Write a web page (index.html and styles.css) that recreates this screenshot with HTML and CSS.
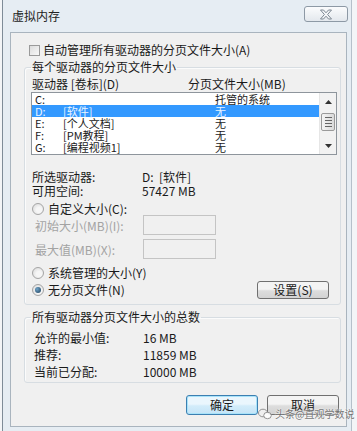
FILE: index.html
```html
<!DOCTYPE html>
<html lang="zh-CN">
<head>
    <meta charset="UTF-8">
    <meta name="viewport" content="width=device-width, initial-scale=1.0">
    <title>虚拟内存</title>
    <link rel="stylesheet" href="styles.css">
</head>
<body>
<div class="window">
    <div class="titlebar">
        <span class="title">虚拟内存</span>
        <div class="close">
            <svg width="14" height="11" viewBox="0 0 14 11">
                <path d="M1.5 1 H4.5 L7 3.8 L9.5 1 H12.5 L8.6 5.5 L12.5 10 H9.5 L7 7.2 L4.5 10 H1.5 L5.4 5.5 Z" fill="#f4f6f8" stroke="#7d8893" stroke-width="1"/>
            </svg>
        </div>
    </div>

    <div class="client">
        <div class="check-row">
            <span class="checkbox"></span>
            <span>自动管理所有驱动器的分页文件大小(A)</span>
        </div>

        <fieldset class="group group-drives">
            <legend>每个驱动器的分页文件大小</legend>
            <div class="list-head">
                <span>驱动器 [卷标](D)</span>
                <span>分页文件大小(MB)</span>
            </div>
            <div class="listbox">
                <div class="rows">
                    <div class="row"><span>C:</span><span></span><span>托管的系统</span></div>
                    <div class="row selected"><span>D:</span><span>[软件]</span><span>无</span></div>
                    <div class="row"><span>E:</span><span>[个人文档]</span><span>无</span></div>
                    <div class="row"><span>F:</span><span>[PM教程]</span><span>无</span></div>
                    <div class="row"><span>G:</span><span>[编程视频1]</span><span>无</span></div>
                </div>
                <div class="scrollbar">
                    <div class="sb-btn">
                        <svg width="7" height="4" viewBox="0 0 7 4"><path d="M0 4 L3.5 0 L7 4 Z" fill="#333"/></svg>
                    </div>
                    <div class="sb-track">
                        <div class="thumb">
                            <span></span><span></span><span></span><span></span>
                        </div>
                    </div>
                    <div class="sb-btn">
                        <svg width="7" height="4" viewBox="0 0 7 4"><path d="M0 0 L7 0 L3.5 4 Z" fill="#333"/></svg>
                    </div>
                </div>
            </div>

            <div class="info first">
                <span class="info-label">所选驱动器:</span>
                <span>D:&nbsp;&nbsp;[软件]</span>
            </div>
            <div class="info">
                <span class="info-label">可用空间:</span>
                <span>57427 MB</span>
            </div>

            <div class="radio-row custom">
                <span class="radio"></span>
                <span>自定义大小(C):</span>
            </div>
            <div class="field-row">
                <span class="field-label">初始大小(MB)(I):</span>
                <span class="textbox"></span>
            </div>
            <div class="field-row second">
                <span class="field-label">最大值(MB)(X):</span>
                <span class="textbox"></span>
            </div>

            <div class="radio-row system">
                <span class="radio"></span>
                <span>系统管理的大小(Y)</span>
            </div>
            <div class="last-row">
                <div class="radio-row">
                    <span class="radio checked"></span>
                    <span>无分页文件(N)</span>
                </div>
                <button class="btn set-btn">设置(S)</button>
            </div>
        </fieldset>

        <fieldset class="group group-total">
            <legend>所有驱动器分页文件大小的总数</legend>
            <div class="total first">
                <span class="total-label">允许的最小值:</span>
                <span>16 MB</span>
            </div>
            <div class="total">
                <span class="total-label">推荐:</span>
                <span>11859 MB</span>
            </div>
            <div class="total">
                <span class="total-label">当前已分配:</span>
                <span>10000 MB</span>
            </div>
        </fieldset>

        <div class="buttons">
            <button class="btn default">确定</button>
            <button class="btn">取消</button>
        </div>
    </div>

    <div class="watermark">
        <svg width="14" height="12" viewBox="0 0 14 12">
            <ellipse cx="5" cy="5" rx="4.5" ry="3.8" fill="none" stroke="#8a8a8a" stroke-width="1"/>
            <ellipse cx="9.5" cy="7.5" rx="3.8" ry="3.2" fill="#fff" stroke="#8a8a8a" stroke-width="1"/>
        </svg>
        <span>头条@直观学数说</span>
    </div>
</div>
</body>
</html>
```

FILE: styles.css
```css
body {
    margin: 0;
    background-color: #f3f5f7;
    font-family: "Noto Sans CJK SC", "Liberation Sans", sans-serif;
    font-size: 12px;
    color: #1a1a1a;
}

.window {
    position: relative;
    width: 350px;
    height: 431px;
    margin-left: 2px;
    box-sizing: border-box;
    border-left: 1px solid #7f8c98;
    border-right: 1px solid #b5c0ca;
    background-color: #e6edf3;
}

.titlebar {
    height: 32px;
    display: flex;
    justify-content: space-between;
    align-items: flex-start;
    padding: 6px 3px 0 9px;
    box-sizing: border-box;
}

.title {
    margin-top: 3px;
    line-height: 14px;
    font-size: 12px;
    color: #222;
}

.close {
    width: 44px;
    height: 16px;
    box-sizing: border-box;
    border: 1px solid #8d99a5;
    border-radius: 3px;
    background: linear-gradient(#fbfcfd, #e3e8ed);
    display: flex;
    justify-content: center;
    align-items: center;
}

.client {
    margin-left: 7px;
    width: 337px;
    height: 395px;
    box-sizing: border-box;
    border: 1px solid #a9b4be;
    background-color: #f0f0f0;
    padding: 10px 5px 0 13px;
}

.check-row {
    height: 14px;
    line-height: 14px;
    display: flex;
    align-items: center;
    gap: 3px;
    padding-left: 5px;
}

.checkbox {
    width: 11px;
    height: 11px;
    box-sizing: border-box;
    border: 1px solid #9a9a9a;
    background: linear-gradient(135deg, #dcdcdc, #f8f8f8);
}

.group {
    margin: 3px 0 0 0;
    width: 317px;
    box-sizing: border-box;
    border: 1px solid #d7dde2;
    border-radius: 3px;
    padding: 0 3px 5px 6px;
    box-shadow: inset 1px 1px 0 #fbfbfb;
}

.group legend {
    padding: 0 1px;
    line-height: 14px;
    height: 14px;
}

.list-head {
    margin-top: 3px;
    height: 14px;
    line-height: 14px;
    display: grid;
    grid-template-columns: 156px 1fr;
    padding-left: 1px;
}

.listbox {
    margin-top: 1px;
    height: 63px;
    box-sizing: border-box;
    border: 1px solid #8e959c;
    background-color: #fff;
    display: flex;
}

.rows {
    flex: 1;
}

.row {
    height: 12px;
    line-height: 12px;
    font-size: 11px;
    display: grid;
    grid-template-columns: 28px 152px 1fr;
    padding-left: 3px;
}

.row.selected {
    background-color: #3399ff;
    color: #eaf4ff;
}

.scrollbar {
    width: 17px;
    display: flex;
    flex-direction: column;
    background-color: #f2f2f2;
    border-left: 1px solid #e6e6e6;
    box-sizing: border-box;
}

.sb-btn {
    height: 17px;
    display: flex;
    justify-content: center;
    align-items: center;
}

.sb-track {
    flex: 1;
}

.thumb {
    margin: 3px 1px 0 1px;
    height: 18px;
    box-sizing: border-box;
    border: 1px solid #9a9a9a;
    border-radius: 2px;
    background: linear-gradient(90deg, #f4f4f4, #dadada);
    display: flex;
    flex-direction: column;
    justify-content: center;
    align-items: center;
    gap: 2px;
}

.thumb span {
    width: 7px;
    height: 1px;
    background-color: #666;
}

.info {
    height: 14px;
    line-height: 14px;
    display: flex;
    padding-left: 1px;
}

.info.first {
    margin-top: 15px;
}

.info-label {
    width: 110px;
}

.radio-row {
    height: 12px;
    line-height: 12px;
    display: flex;
    align-items: center;
    gap: 4px;
    padding-left: 1px;
}

.radio-row.custom {
    margin-top: 5px;
}

.radio-row.system {
    margin-top: 8px;
}

.radio {
    width: 12px;
    height: 12px;
    box-sizing: border-box;
    border-radius: 50%;
    border: 1px solid #a5a5a5;
    background: radial-gradient(circle at 60% 60%, #f6f6f6 30%, #d6d6d6 100%);
    display: flex;
    justify-content: center;
    align-items: center;
}

.radio.checked::after {
    content: "";
    width: 6px;
    height: 6px;
    border-radius: 50%;
    background: radial-gradient(circle at 35% 35%, #6fa3c8, #1d3f5a);
}

.field-row {
    height: 20px;
    display: flex;
    align-items: center;
    color: #a3a3a3;
    padding-left: 4px;
}

.field-row.second {
    margin-top: 4px;
}

.field-label {
    width: 108px;
}

.textbox {
    width: 73px;
    height: 20px;
    box-sizing: border-box;
    border: 1px solid #c4c4c4;
    background-color: #f0f0f0;
}

.last-row {
    margin-top: 2px;
    height: 18px;
    display: flex;
    justify-content: space-between;
    align-items: center;
    padding-right: 8px;
}

.btn {
    font-family: "Noto Sans CJK SC", "Liberation Sans", sans-serif;
    font-size: 12px;
    color: #1a1a1a;
    width: 72px;
    height: 20px;
    padding: 0;
    line-height: 16px;
    box-sizing: border-box;
    border: 1px solid #707070;
    border-radius: 3px;
    background: linear-gradient(#f4f4f4 45%, #dddddd 55%, #d3d3d3);
}

.set-btn {
    height: 18px;
    line-height: 14px;
}

.btn.default {
    border-color: #3c7fb1;
    box-shadow: inset 0 0 0 1px #a8e3fa;
    background: linear-gradient(#eaf6fd 45%, #d2ecfa 55%, #c5e4f7);
}

.group-total {
    margin-top: 5px;
    padding-bottom: 2px;
}

.total {
    height: 17px;
    line-height: 17px;
    display: flex;
    padding-left: 3px;
}

.total.first {
    margin-top: 5px;
}

.total-label {
    width: 109px;
}

.buttons {
    margin-top: 12px;
    width: 317px;
    display: flex;
    justify-content: flex-end;
    gap: 9px;
    padding-right: 2px;
    box-sizing: border-box;
}

.watermark {
    position: absolute;
    left: 255px;
    top: 408px;
    display: flex;
    align-items: center;
    gap: 3px;
    font-size: 10px;
    line-height: 12px;
    white-space: nowrap;
    color: #6a6a6a;
    text-shadow: 0 0 2px #fff, 0 0 2px #fff;
    opacity: 0.9;
}
```
